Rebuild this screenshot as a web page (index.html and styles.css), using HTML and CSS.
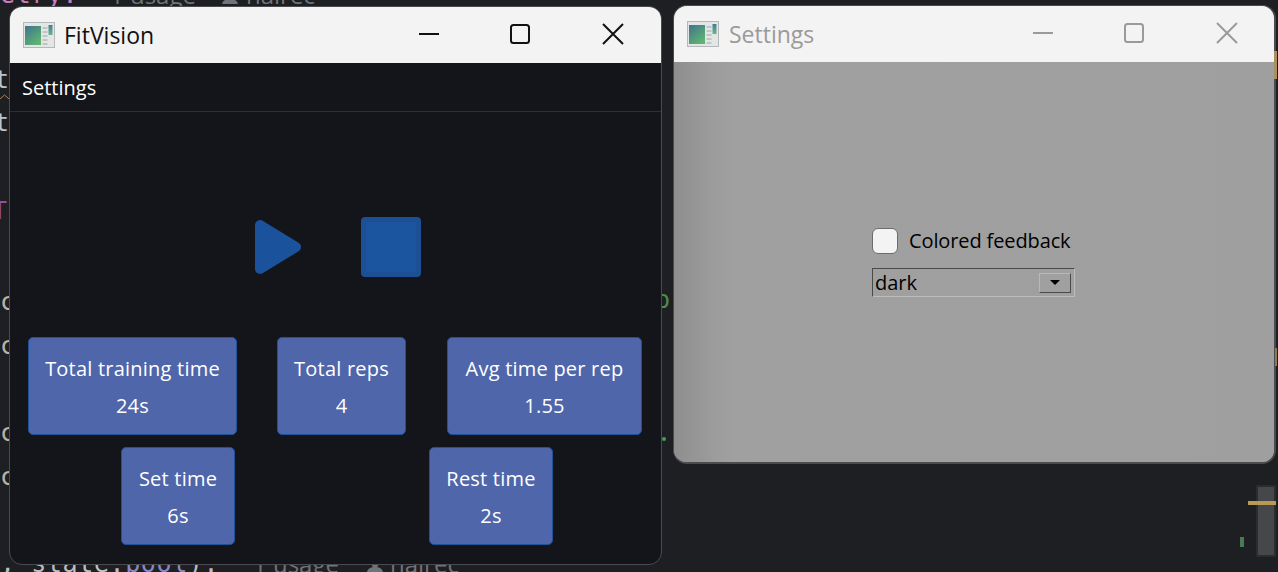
FILE: index.html
```html
<!DOCTYPE html>
<html lang="en">
<head>
<meta charset="utf-8">
<title>FitVision</title>
<link rel="stylesheet" href="styles.css">
</head>
<body>
<div class="desktop">
  <div class="code code-top"><span class="pink-top">etry:</span><span class="hint hint-top">1 usage</span><span class="hint hint-author">hairec</span></div>
  <svg class="person person-top" viewBox="0 0 16 10"><circle cx="8" cy="3" r="3"/><path d="M0 10q1-5 8-5t8 5z"/></svg>
  <div class="code code-bottom"><span>, state.</span><span class="violet">bool</span><span>):</span><span class="hint hint-bottom">1 usage</span><span class="hint hint-bauthor">hairec</span></div>
  <svg class="person person-bottom" viewBox="0 0 16 10"><circle cx="8" cy="3" r="3"/><path d="M0 10q1-5 8-5t8 5z"/></svg>
  <span class="code frag f1">t</span>
  <span class="code frag f2">t</span>
  <span class="code frag f3">T</span>
  <span class="code frag f4">c</span>
  <span class="code frag f5">c</span>
  <span class="code frag f6">c</span>
  <span class="code frag f7">c</span>
  <span class="code frag f8">p</span>
  <span class="dot"></span>
  <svg class="squiggle" viewBox="0 0 9 5"><path d="M0 5l4.500-4 4.500 4"/></svg>
  <div class="scrollbar"></div>
  <span class="mark-gold"></span>
  <span class="mark-green"></span>

  <section class="window win-main">
    <header class="titlebar">
      <svg class="app-icon" viewBox="0 0 32 26"><rect x=".5" y=".5" width="31" height="25" fill="#e4e6e6" stroke="#b5b8b8"/><defs><linearGradient id="g1" x1="0" y1="0" x2=".7" y2="1"><stop offset="0" stop-color="#3f7390"/><stop offset="1" stop-color="#5fb56f"/></linearGradient><linearGradient id="c1" x1="0" y1="0" x2="0" y2="1"><stop offset="0" stop-color="#3f7f96"/><stop offset="1" stop-color="#6ab58a"/></linearGradient></defs><path d="M2 4h16v19H2z" fill="url(#g1)"/><path d="M19.500 6h5M19.500 10h5M19.500 14h5M19.500 18h5M19.500 22h5" stroke="#b6bbbb" stroke-width="1.400"/><path d="M25.500 3h4v10h-4z" fill="url(#c1)"/></svg>
      <span class="title">FitVision</span>
      <div class="controls">
        <svg viewBox="0 0 22 22"><path d="M1 11h20"/></svg>
        <svg viewBox="0 0 22 22"><rect x="2" y="2" width="18" height="18" rx="2.500"/></svg>
        <svg viewBox="0 0 22 22"><path d="M1 1l20 20M21 1L1 21"/></svg>
      </div>
    </header>
    <nav class="menubar">Settings</nav>
    <main class="main-body">
      <div class="transport">
        <svg class="play" viewBox="0 0 46 54"><path d="M5 5V49L41 27Z" fill="#1b529c" stroke="#1b529c" stroke-width="10" stroke-linejoin="round"/></svg>
        <div class="stop"></div>
      </div>
      <div class="stats row-one">
        <div class="stat w-total"><span>Total training time</span><span>24s</span></div>
        <div class="stat w-reps"><span>Total reps</span><span>4</span></div>
        <div class="stat w-avg"><span>Avg time per rep</span><span>1.55</span></div>
      </div>
      <div class="stats row-two">
        <div class="stat w-set"><span>Set time</span><span>6s</span></div>
        <div class="stat w-rest"><span>Rest time</span><span>2s</span></div>
      </div>
    </main>
  </section>

  <section class="window win-settings">
    <header class="titlebar inactive">
      <svg class="app-icon" viewBox="0 0 32 26"><rect x=".5" y=".5" width="31" height="25" fill="#e4e6e6" stroke="#b5b8b8"/><defs><linearGradient id="g2" x1="0" y1="0" x2=".7" y2="1"><stop offset="0" stop-color="#3f7390"/><stop offset="1" stop-color="#5fb56f"/></linearGradient><linearGradient id="c2" x1="0" y1="0" x2="0" y2="1"><stop offset="0" stop-color="#3f7f96"/><stop offset="1" stop-color="#6ab58a"/></linearGradient></defs><path d="M2 4h16v19H2z" fill="url(#g2)"/><path d="M19.500 6h5M19.500 10h5M19.500 14h5M19.500 18h5M19.500 22h5" stroke="#b6bbbb" stroke-width="1.400"/><path d="M25.500 3h4v10h-4z" fill="url(#c2)"/></svg>
      <span class="title">Settings</span>
      <div class="controls">
        <svg viewBox="0 0 22 22"><path d="M1 11h20"/></svg>
        <svg viewBox="0 0 22 22"><rect x="2" y="2" width="18" height="18" rx="2.500"/></svg>
        <svg viewBox="0 0 22 22"><path d="M1 1l20 20M21 1L1 21"/></svg>
      </div>
    </header>
    <div class="settings-body">
      <div class="form">
        <label class="check"><span class="box"></span>Colored feedback</label>
        <div class="combo"><span>dark</span><span class="arrow-btn"><i class="arrow"></i></span></div>
      </div>
    </div>
  </section>
  <span class="mark-edge"></span>
  <span class="mark-edge-low"></span>
</div>
</body>
</html>
```

FILE: styles.css
```css
* { box-sizing: border-box; }
html, body { margin: 0; height: 100%; }
body { background: #1e1f22; overflow: hidden; }
.desktop { position: relative; width: 1278px; height: 572px; overflow: hidden; font-family: "Open Sans", "Noto Sans", sans-serif; }

.code { position: absolute; font-family: "DejaVu Sans Mono", monospace; font-size: 25px; letter-spacing: .6px; line-height: 30px; color: #bcbec4; white-space: pre; }
.code-top { left: 0; top: -20px; display: flex; }
.code-bottom { left: 0; top: 549px; display: flex; }
.pink-top { color: #c77dbb; }
.violet { color: #8888c6; }
.hint { position: absolute; font-family: "Open Sans", sans-serif; font-size: 24px; letter-spacing: 0; color: #6f737a; }
.hint-top { left: 110px; }
.hint-author { left: 246px; }
.hint-bottom { left: 253px; }
.hint-bauthor { left: 390px; }
.person { position: absolute; width: 16px; height: 10px; fill: #6f737a; }
.person-top { left: 222px; top: -6px; }
.person-bottom { left: 367px; top: 562px; }
.f1 { left: -6px; top: 65px; color: #b9c3cc; }
.f2 { left: -6px; top: 108px; color: #b9c3cc; }
.f3 { left: -8px; top: 196px; color: #8f4f9a; }
.f4 { left: 0; top: 287px; color: #b9b4a8; }
.f5 { left: 0; top: 331px; color: #b9b4a8; }
.f6 { left: 0; top: 418px; color: #b9b4a8; }
.f7 { left: 0; top: 462px; color: #b9b4a8; }
.f8 { left: 655px; top: 285px; color: #4f8a4f; }
.dot { position: absolute; left: 662px; top: 437px; width: 4px; height: 4px; border-radius: 50%; background: #4f9a58; }
.squiggle { position: absolute; left: 0; top: 94px; width: 9px; height: 5px; fill: none; stroke: #a88a5c; stroke-width: 1; }
.scrollbar { position: absolute; left: 1256px; top: 485px; width: 20px; height: 72px; background: #46474a; border: 2px solid #2b2c2f; }
.mark-gold { position: absolute; left: 1248px; top: 501px; width: 28px; height: 4px; background: #b89a55; }
.mark-green { position: absolute; left: 1240px; top: 537px; width: 4px; height: 10px; background: #4a7a55; }
.mark-edge { position: absolute; left: 1274px; top: 51px; width: 3px; height: 28px; background: #a8905f; }
.mark-edge-low { position: absolute; left: 1275px; top: 348px; width: 2px; height: 18px; background: #8a7a55; }

.window { position: absolute; display: flex; flex-direction: column; overflow: hidden; border: 1px solid #4a4b4e; border-radius: 13px; }
.win-main { left: 9px; top: 6px; width: 653px; height: 559px; background: #14151a; }
.win-settings { left: 673px; top: 5px; width: 603px; height: 459px; background: #9f9f9f; border-width: 1px 2px 2px 1px; border-radius: 14px; }

.titlebar { flex: none; height: 56px; display: flex; align-items: center; padding-left: 13px; background: #f3f3f3; color: #111; }
.app-icon { width: 32px; height: 26px; flex: none; }
.title { margin-left: 10px; font-size: 23px; line-height: 56px; }
.win-main .title { margin-left: 9px; }
.controls { margin-left: auto; display: flex; align-items: center; gap: 71px; padding-right: 37px; }
.controls svg { width: 22px; height: 22px; fill: none; stroke: #111; stroke-width: 2; margin-top: -2px; }
.controls svg:first-child { margin-right: -2px; }
.inactive { color: #9a9a9a; }
.inactive .controls { padding-right: 36px; }
.inactive .controls svg { stroke: #9a9a9a; }

.menubar { flex: none; height: 49px; padding: 0 12px; display: flex; align-items: center; color: #fff; font-size: 20px; border-bottom: 1px solid #2e2f36; }

.main-body { flex: 1; display: flex; flex-direction: column; }
.transport { display: flex; align-items: center; height: 60px; margin-top: 105px; padding-left: 245px; gap: 60px; }
.play { width: 46px; height: 54px; flex: none; }
.stop { width: 60px; height: 60px; background: #1b55a0; border: 5px solid #1c4f93; border-radius: 4px; }

.stats { display: flex; }
.row-one { margin-top: 60px; padding-left: 18px; gap: 40px; }
.row-two { margin-top: 12px; padding-left: 111px; gap: 194px; }
.stat { height: 98px; padding-top: 12px; display: flex; flex-direction: column; align-items: center; background: #4f66aa; border: 1px solid #1f5299; border-radius: 5px; color: #fff; font-size: 20px; letter-spacing: .22px; line-height: 37px; white-space: nowrap; }
.w-total { width: 209px; }
.w-reps { width: 129px; }
.w-avg { width: 195px; margin-left: 1px; }
.w-set { width: 114px; }
.w-rest { width: 124px; }

.settings-body { flex: 1; display: flex; padding: 166px 0 0 198px; background: linear-gradient(90deg, #8e8e8e 0, #9c9c9c 40px, #a0a0a0 60px, #9f9f9f 100%); }
.form { display: flex; flex-direction: column; gap: 14px; width: 203px; }
.check { display: flex; align-items: center; gap: 11px; color: #000; font-size: 20px; letter-spacing: -.12px; line-height: 28px; height: 26px; white-space: nowrap; }
.check .box { margin-top: 0; }
.combo { height: 29px; display: flex; align-items: center; justify-content: space-between; padding: 0 3px 0 2px; color: #000; font-size: 20px; line-height: 29px; border: 1px solid; border-color: #4a4a4a #bdbdbd #bdbdbd #4a4a4a; }
.box { width: 26px; height: 26px; background: #f3f3f3; border: 1px solid #6c6c6c; border-radius: 6px; flex: none; }
.arrow-btn { width: 32px; height: 20px; display: flex; align-items: center; justify-content: center; background: #a0a0a0; border: 1px solid; border-color: #b8b8b8 #4a4a4a #4a4a4a #b8b8b8; }
.arrow { width: 0; height: 0; border: 5px solid transparent; border-top: 5px solid #000; border-bottom: 0; }
```
